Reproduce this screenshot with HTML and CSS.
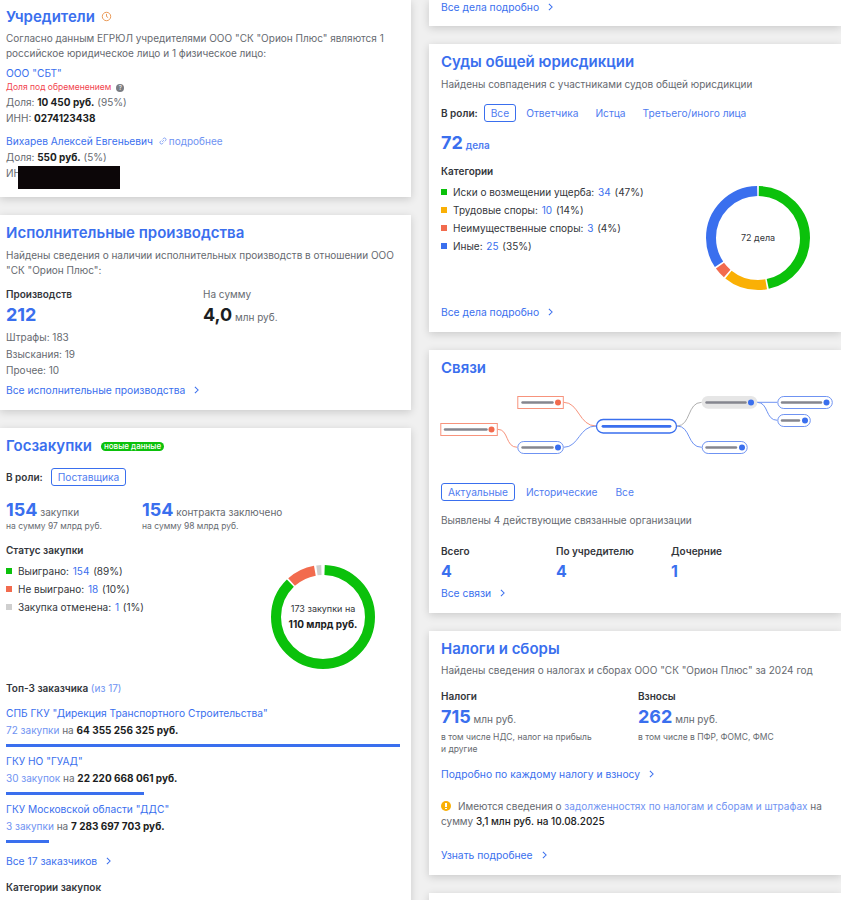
FILE: index.html
```html
<!DOCTYPE html>
<html lang="ru">
<head>
<meta charset="utf-8">
<title>Досье</title>
<link rel="stylesheet" href="styles.css">
</head>
<body>
<div class="page">
  <div class="col col-left">
    <section class="card card-founders">
      <h2 class="title">Учредители
        <svg class="clock" viewBox="0 0 12 12" width="11" height="11"><circle cx="6" cy="6" r="4.6"/><path d="M6 3.2V6l1.8 1.2"/></svg>
      </h2>
      <p class="text para">Согласно данным ЕГРЮЛ учредителями ООО "СК "Орион Плюс" являются 1 российское юридическое лицо и 1 физическое лицо:</p>
      <div class="person">
        <a class="line link">ООО "СБТ"</a>
        <div class="warn-line">Доля под обременением <span class="help">?</span></div>
        <div class="line">Доля: <b>10 450 руб.</b> (95%)</div>
        <div class="line">ИНН: <b>0274123438</b></div>
      </div>
      <div class="person person-2">
        <div class="line"><a class="link">Вихарев Алексей Евгеньевич</a>
          <svg class="chain" viewBox="0 0 12 12" width="10" height="10"><path d="M5 7l2-2M4 5.5L2.7 6.8a1.8 1.8 0 0 0 2.5 2.5L6.500 8M5.500 4l1.300-1.300a1.800 1.800 0 0 1 2.500 2.500L8 6.500"/></svg><a class="link-light">подробнее</a></div>
        <div class="line">Доля: <b>550 руб.</b> (5%)</div>
        <div class="line redacted-line">ИНН<span class="redacted"></span></div>
      </div>
    </section>

    <section class="card card-exec">
      <h2 class="title">Исполнительные производства</h2>
      <p class="text para">Найдены сведения о наличии исполнительных производств в отношении ООО "СК "Орион Плюс":</p>
      <div class="exec-grid">
        <div>
          <div class="label">Производств</div>
          <div class="num-big">212</div>
        </div>
        <div>
          <div class="text">На сумму</div>
          <div class="sum"><b>4,0</b> млн руб.</div>
        </div>
      </div>
      <div class="exec-list">
        <div>Штрафы: 183</div>
        <div>Взыскания: 19</div>
        <div>Прочее: 10</div>
      </div>
      <a class="more more-exec">Все исполнительные производства <svg class="chev" viewBox="0 0 6 10"><path d="M1 1l4 4-4 4"/></svg></a>
    </section>

    <section class="card card-zak">
      <h2 class="title title-badge">Госзакупки <span class="badge">новые данные</span></h2>
      <div class="role-row">
        <span class="label">В роли:</span>
        <span class="tab tab-on">Поставщика</span>
      </div>
      <div class="zak-stats">
        <div class="zak-stat">
          <div class="stat-line"><span class="num-mid">154</span> <span class="unit">закупки</span></div>
          <div class="small">на сумму 97 млрд руб.</div>
        </div>
        <div class="zak-stat">
          <div class="stat-line"><span class="num-mid">154</span> <span class="unit">контракта заключено</span></div>
          <div class="small">на сумму 98 млрд руб.</div>
        </div>
      </div>
      <div class="label status-label">Статус закупки</div>
      <div class="chart-row chart-row-zak">
        <ul class="legend">
          <li><i class="sq green"></i>Выиграно: <a class="link">154</a> (89%)</li>
          <li><i class="sq red"></i>Не выиграно: <a class="link">18</a> (10%)</li>
          <li><i class="sq grey"></i>Закупка отменена: <a class="link">1</a> (1%)</li>
        </ul>
        <div class="donut donut-zak">
          <svg viewBox="0 0 104 104" width="104" height="104">
            <g class="ring" transform="rotate(-90 52 52)">
              <circle r="47" cx="52" cy="52" stroke="#0bc10b" pathLength="360" stroke-dasharray="314 46" stroke-dashoffset="-2"/>
              <circle r="47" cx="52" cy="52" stroke="#f26b4e" pathLength="360" stroke-dasharray="32 328" stroke-dashoffset="-318"/>
              <circle r="47" cx="52" cy="52" stroke="#cfcfcf" pathLength="360" stroke-dasharray="5.500 354.500" stroke-dashoffset="-352.500"/>
            </g>
          </svg>
          <div class="donut-text"><span>173 закупки на</span><b>110 млрд руб.</b></div>
        </div>
      </div>
      <div class="label top-label">Топ-3 заказчика <span class="link-light light">(из 17)</span></div>
      <div class="cust">
        <a class="line link">СПБ ГКУ "Дирекция Транспортного Строительства"</a>
        <div class="line"><a class="link-light">72 закупки</a> на <b>64 355 256 325 руб.</b></div>
        <div class="bar bar-1"></div>
      </div>
      <div class="cust">
        <a class="line link">ГКУ НО "ГУАД"</a>
        <div class="line"><a class="link-light">30 закупок</a> на <b>22 220 668 061 руб.</b></div>
        <div class="bar bar-2"></div>
      </div>
      <div class="cust">
        <a class="line link">ГКУ Московской области "ДДС"</a>
        <div class="line"><a class="link-light">3 закупки</a> на <b>7 283 697 703 руб.</b></div>
        <div class="bar bar-3"></div>
      </div>
      <a class="more more-cust">Все 17 заказчиков <svg class="chev" viewBox="0 0 6 10"><path d="M1 1l4 4-4 4"/></svg></a>
      <div class="label cat-label">Категории закупок</div>
    </section>
  </div>

  <div class="col col-right">
    <section class="card card-prev">
      <a class="more">Все дела подробно <svg class="chev" viewBox="0 0 6 10"><path d="M1 1l4 4-4 4"/></svg></a>
    </section>

    <section class="card card-court">
      <h2 class="title">Суды общей юрисдикции</h2>
      <p class="text para">Найдены совпадения с участниками судов общей юрисдикции</p>
      <div class="role-row role-court">
        <span class="label">В роли:</span>
        <span class="tab tab-on">Все</span>
        <span class="tab">Ответчика</span>
        <span class="tab">Истца</span>
        <span class="tab">Третьего/иного лица</span>
      </div>
      <div class="cases"><span class="num-mid">72</span> <span class="cases-unit">дела</span></div>
      <div class="label cat-court">Категории</div>
      <div class="chart-row chart-row-court">
        <ul class="legend">
          <li><i class="sq green"></i>Иски о возмещении ущерба: <a class="link">34</a> (47%)</li>
          <li><i class="sq yellow"></i>Трудовые споры: <a class="link">10</a> (14%)</li>
          <li><i class="sq red"></i>Неимущественные споры: <a class="link">3</a> (4%)</li>
          <li><i class="sq blue"></i>Иные: <a class="link">25</a> (35%)</li>
        </ul>
        <div class="donut donut-court">
          <svg viewBox="0 0 104 104" width="104" height="104">
            <g class="ring" transform="rotate(-90 52 52)">
              <circle r="47" cx="52" cy="52" stroke="#0bc10b" pathLength="360" stroke-dasharray="167 193" stroke-dashoffset="-1"/>
              <circle r="47" cx="52" cy="52" stroke="#fab005" pathLength="360" stroke-dasharray="49 311" stroke-dashoffset="-170"/>
              <circle r="47" cx="52" cy="52" stroke="#f26b4e" pathLength="360" stroke-dasharray="13 347" stroke-dashoffset="-221"/>
              <circle r="47" cx="52" cy="52" stroke="#3a6fee" pathLength="360" stroke-dasharray="123 237" stroke-dashoffset="-236"/>
            </g>
          </svg>
          <div class="donut-text"><span>72 дела</span></div>
        </div>
      </div>
      <a class="more more-court">Все дела подробно <svg class="chev" viewBox="0 0 6 10"><path d="M1 1l4 4-4 4"/></svg></a>
    </section>

    <section class="card card-links">
      <h2 class="title">Связи</h2>
      <svg class="graph" viewBox="0 10 411 70" width="411" height="70">
        <g class="edge edge-red">
          <path d="M134.700 22.300C150 22.300 150 46 167 46"/>
          <path d="M68.700 49.300C80 49.300 76 67.300 88.300 67.300"/>
        </g>
        <g class="edge edge-blue">
          <path d="M134.700 67.300C150 67.300 150 46 167 46"/>
          <path d="M248 46C262 46 258 67.300 272.700 67.300"/>
          <path d="M328 22.300H348.300"/>
          <path d="M328 22.300C340 22.300 336 40.300 348.300 40.300"/>
        </g>
        <path class="edge edge-grey" d="M248 46C262 46 258 22.300 272.700 22.300"/>

        <rect class="node node-red" x="88.800" y="16.500" width="45.500" height="12"/>
        <rect class="node node-red" x="11.800" y="43.500" width="56.500" height="12"/>
        <rect class="node node-blue" x="88.800" y="61.500" width="45.500" height="12" rx="6"/>
        <rect class="node node-main" x="167.500" y="39.500" width="80" height="13.500" rx="6.700"/>
        <rect class="node-grey" x="272.700" y="16" width="55.600" height="12.700" rx="6.300"/>
        <rect class="node node-blue" x="348.800" y="16.500" width="54.500" height="12" rx="6"/>
        <rect class="node node-blue" x="348.800" y="34.500" width="32.500" height="12" rx="6"/>
        <rect class="node node-blue" x="273.200" y="61.500" width="45" height="12" rx="6"/>

        <g class="dash">
          <path d="M93.500 22.500h30"/>
          <path d="M16 49.500h41.500"/>
          <path d="M93.500 67.500h30"/>
          <path d="M277.500 22.500h39"/>
          <path d="M353 22.500h39"/>
          <path d="M353 40.500h17"/>
          <path d="M277.500 67.500h29.500"/>
        </g>
        <path class="dash-main" d="M174 46.300h67"/>
        <g class="dot-red"><circle cx="129" cy="22.500" r="3"/><circle cx="62.500" cy="49.500" r="3"/></g>
        <g class="dot-blue">
          <circle cx="129" cy="67.500" r="3"/>
          <circle cx="322" cy="22.500" r="3"/>
          <circle cx="397.500" cy="22.500" r="3"/>
          <circle cx="376" cy="40.500" r="3"/>
          <circle cx="313" cy="67.500" r="3"/>
        </g>
      </svg>
      <div class="role-row role-links">
        <span class="tab tab-on">Актуальные</span>
        <span class="tab">Исторические</span>
        <span class="tab">Все</span>
      </div>
      <p class="text links-para">Выявлены 4 действующие связанные организации</p>
      <div class="links-grid">
        <div><div class="label">Всего</div><div class="num-link">4</div></div>
        <div><div class="label">По учредителю</div><div class="num-link">4</div></div>
        <div><div class="label">Дочерние</div><div class="num-link">1</div></div>
      </div>
      <a class="more more-links">Все связи <svg class="chev" viewBox="0 0 6 10"><path d="M1 1l4 4-4 4"/></svg></a>
    </section>

    <section class="card card-tax">
      <h2 class="title">Налоги и сборы</h2>
      <p class="text para">Найдены сведения о налогах и сборах ООО "СК "Орион Плюс" за 2024 год</p>
      <div class="tax-grid">
        <div>
          <div class="label">Налоги</div>
          <div class="tax-num"><span class="num-mid">715</span> <span class="unit">млн руб.</span></div>
          <div class="small small-tax">в том числе НДС, налог на прибыль<br>и другие</div>
        </div>
        <div>
          <div class="label">Взносы</div>
          <div class="tax-num"><span class="num-mid">262</span> <span class="unit">млн руб.</span></div>
          <div class="small small-tax">в том числе в ПФР, ФОМС, ФМС</div>
        </div>
      </div>
      <a class="more more-tax">Подробно по каждому налогу и взносу <svg class="chev" viewBox="0 0 6 10"><path d="M1 1l4 4-4 4"/></svg></a>
      <p class="text debt"><span class="warn-ico"></span>Имеются сведения о <a class="link-light">задолженностях по налогам и сборам и штрафах</a> на<br>сумму <b class="semi">3,1 млн руб. на 10.08.2025</b></p>
      <a class="more more-learn">Узнать подробнее <svg class="chev" viewBox="0 0 6 10"><path d="M1 1l4 4-4 4"/></svg></a>
    </section>

    <section class="card card-next"></section>
  </div>
</div>
</body>
</html>
```
FILE: styles.css
```css
* { box-sizing: border-box; }
html, body { margin: 0; padding: 0; height: 900px; overflow: hidden; }
body { background: #f0f0f0; font-family: Inter, "Noto Sans", sans-serif; font-size: 10px; line-height: 15px; color: #666a70; }
.page { display: flex; gap: 18px; width: 841px; height: 900px; overflow: hidden; }
.col { display: flex; flex-direction: column; gap: 18px; width: 411px; flex: none; }
.col-right { width: 412px; }
.card { background: #fff; box-shadow: 0 2px 8px rgba(0,0,0,.16); flex: none; }
.col-left .card { padding-left: 6px; padding-right: 11px; }
.col-right .card { padding-left: 12px; padding-right: 10px; }

.title { margin: 0; font-size: 15px; line-height: 20px; font-weight: 600; color: #3a6fee; }
.text { margin: 0; }
.para { margin: 0; }
.link { color: #3a6fee; }
.line .link, a.line { font-size: 10.200px; }
.link-light { color: #6f93f2; }
.light { font-weight: 400; }
.line { display: block; line-height: 16px; }
b { color: #1b1d22; font-weight: 700; }
b.semi { font-weight: 500; }
.label { font-weight: 600; color: #33363b; }
.more { display: block; color: #3a6fee; font-size: 10.300px; line-height: 15px; }
.chev { width: 5px; height: 8px; margin-left: 6px; fill: none; stroke: #3a6fee; stroke-width: 1.300; }

.card-founders { height: 197px; padding-top: 7px; }
.clock { fill: none; stroke: #e8924a; stroke-width: 1; margin-left: 2px; }
.card-founders .para { margin-top: 4px; }
.person { margin-top: 4px; }
.warn-line { color: #f2444f; font-size: 8.500px; line-height: 13px; display: flex; align-items: center; gap: 5px; }
.help { width: 8px; height: 8px; border-radius: 50%; background: #7a7d83; color: #fff; font-size: 6px; line-height: 8px; text-align: center; }
.person-2 { margin-top: 7px; }
.chain { fill: none; stroke: #6f93f2; stroke-width: 1; vertical-align: -1px; margin-left: 2px; margin-right: 1px; }
.redacted-line { position: relative; }
.redacted { position: absolute; left: 12px; top: 1px; width: 102px; height: 23px; background: #0c0608; }

.card-exec { height: 195px; padding-top: 8px; }
.card-exec .para { margin-top: 5px; }
.exec-grid { display: grid; grid-template-columns: 197px 1fr; margin-top: 9px; }
.num-big { font-size: 18px; line-height: 24px; font-weight: 700; color: #3a6fee; margin-top: 1px; }
.sum { line-height: 24px; margin-top: 1px; }
.sum b { font-size: 18px; }
.exec-list { margin-top: 0; }
.exec-list div { line-height: 16.500px; }
.more-exec { margin-top: 4px; }

.card-zak { height: 500px; padding-top: 8px; }
.title-badge { display: flex; align-items: center; gap: 9px; }
.badge { background: #0bc10b; color: #fff; font-size: 8px; line-height: 9px; font-weight: 500; padding: 0 3px; border-radius: 5px; }
.role-row { display: flex; align-items: center; gap: 8px; white-space: nowrap; }
.card-zak .role-row { margin-top: 12px; }
.tab { color: #4f7cf0; font-size: 10.200px; padding: 0 6px; height: 18px; line-height: 16px; border: 1px solid transparent; border-radius: 3px; }
.tab-on { border-color: #3a6fee; }
.zak-stats { display: flex; margin-top: 13px; }
.zak-stat { width: 136px; white-space: nowrap; }
.stat-line { height: 21px; line-height: 22px; }
.num-mid { font-size: 18px; line-height: 22px; font-weight: 700; color: #3a6fee; }
.small { font-size: 8.500px; line-height: 12px; }
.status-label { margin-top: 11px; }
.chart-row { display: flex; justify-content: space-between; }
.legend { list-style: none; margin: 0; padding: 0; color: #33363b; }
.legend li { display: flex; align-items: center; height: 18px; white-space: pre-wrap; }
.legend .link { margin: 0 1px; }
.sq { width: 6px; height: 6px; margin-right: 6px; flex: none; }
.green { background: #0bc10b; }
.red { background: #f26b4e; }
.grey { background: #cfcfcf; }
.yellow { background: #fab005; }
.blue { background: #3a6fee; }
.chart-row-zak { margin-top: 4px; height: 119px; padding-right: 25px; }
.donut { position: relative; width: 104px; height: 104px; flex: none; }
.ring circle { fill: none; stroke-width: 10; }
.donut-zak { margin-top: 3px; }
.donut-text { position: absolute; inset: 0; display: flex; flex-direction: column; align-items: center; justify-content: center; color: #33363b; font-size: 9px; line-height: 14px; }
.donut-text b { font-size: 10px; line-height: 16px; }
.top-label { line-height: 15px; }
.cust { margin-top: 6px; }
.top-label + .cust { margin-top: 9px; }
.cust .line { line-height: 17px; }
.bar { height: 3px; background: #3a6fee; margin-top: 5px; }
.bar-1 { width: 394px; }
.bar-2 { width: 138px; }
.bar-3 { width: 43px; }
.more-cust { margin-top: 11px; }
.cat-label { margin-top: 11px; }

.card-prev { height: 26px; }
.card-court { height: 288px; padding-top: 8px; }
.card-court .para { margin-top: 5px; }
.role-court { margin-top: 12px; gap: 0; }
.role-court .label { margin-right: 6px; }
.role-court .tab { margin-right: 3px; }
.cases { margin-top: 10px; line-height: 22px; }
.cases-unit { color: #4f7cf0; font-weight: 600; }
.cat-court { margin-top: 8px; }
.chart-row-court { margin-top: 4px; height: 122px; padding-right: 21px; }
.donut-court { margin-top: 3px; }
.more-court { margin-top: 0; }

.card-links { height: 263px; padding-top: 8px; }
.graph { display: block; margin: 12px 0 0 -12px; fill: none; }
.edge path, .edge { fill: none; stroke-width: 1; }
.edge-red path { stroke: #f7937c; }
.edge-blue path { stroke: #6f93f2; }
.edge-grey { stroke: #b0b0b0; }
.node { fill: #fff; stroke-width: 1; }
.node-red { stroke: #f7937c; }
.node-blue { stroke: #6f93f2; }
.node-main { stroke: #3a6fee; stroke-width: 1.300; }
.node-grey { fill: #e6e6e6; }
.dash path { stroke: #85868f; stroke-width: 2.400; stroke-linecap: round; }
.dash-main { stroke: #3a6fee; stroke-width: 2.800; stroke-linecap: round; }
.dot-red { fill: #f26b4e; }
.dot-blue { fill: #3a6fee; }
.role-links { margin-top: 23px; gap: 0; }
.role-links .tab { margin-right: 4px; }
.links-para { margin-top: 12px; }
.links-grid { display: grid; grid-template-columns: 115px 115px 1fr; margin-top: 16px; }
.num-link { font-size: 16px; line-height: 22px; font-weight: 700; color: #3a6fee; margin-top: 1px; }
.more-links { margin-top: 4px; }

.card-tax { height: 244px; padding-top: 8px; }
.card-tax .para { margin-top: 4px; }
.tax-grid { display: grid; grid-template-columns: 197px 1fr; margin-top: 11px; }
.tax-num { line-height: 22px; margin-top: 2px; }
.small-tax { margin-top: 0.500px; }
.more-tax { margin-top: 12.500px; }
.debt { margin-top: 17px; }
.warn-ico { position: relative; display: inline-block; width: 10px; height: 10px; margin-right: 7px; border-radius: 50%; background: #fab005; vertical-align: -1px; }
.warn-ico::after { content: ""; position: absolute; left: 4.250px; top: 2px; width: 1.500px; height: 6px; background: linear-gradient(#fff 0 4px, transparent 4px 4.800px, #fff 4.800px); }
.more-learn { margin-top: 19px; }
.card-next { height: 60px; }
```
